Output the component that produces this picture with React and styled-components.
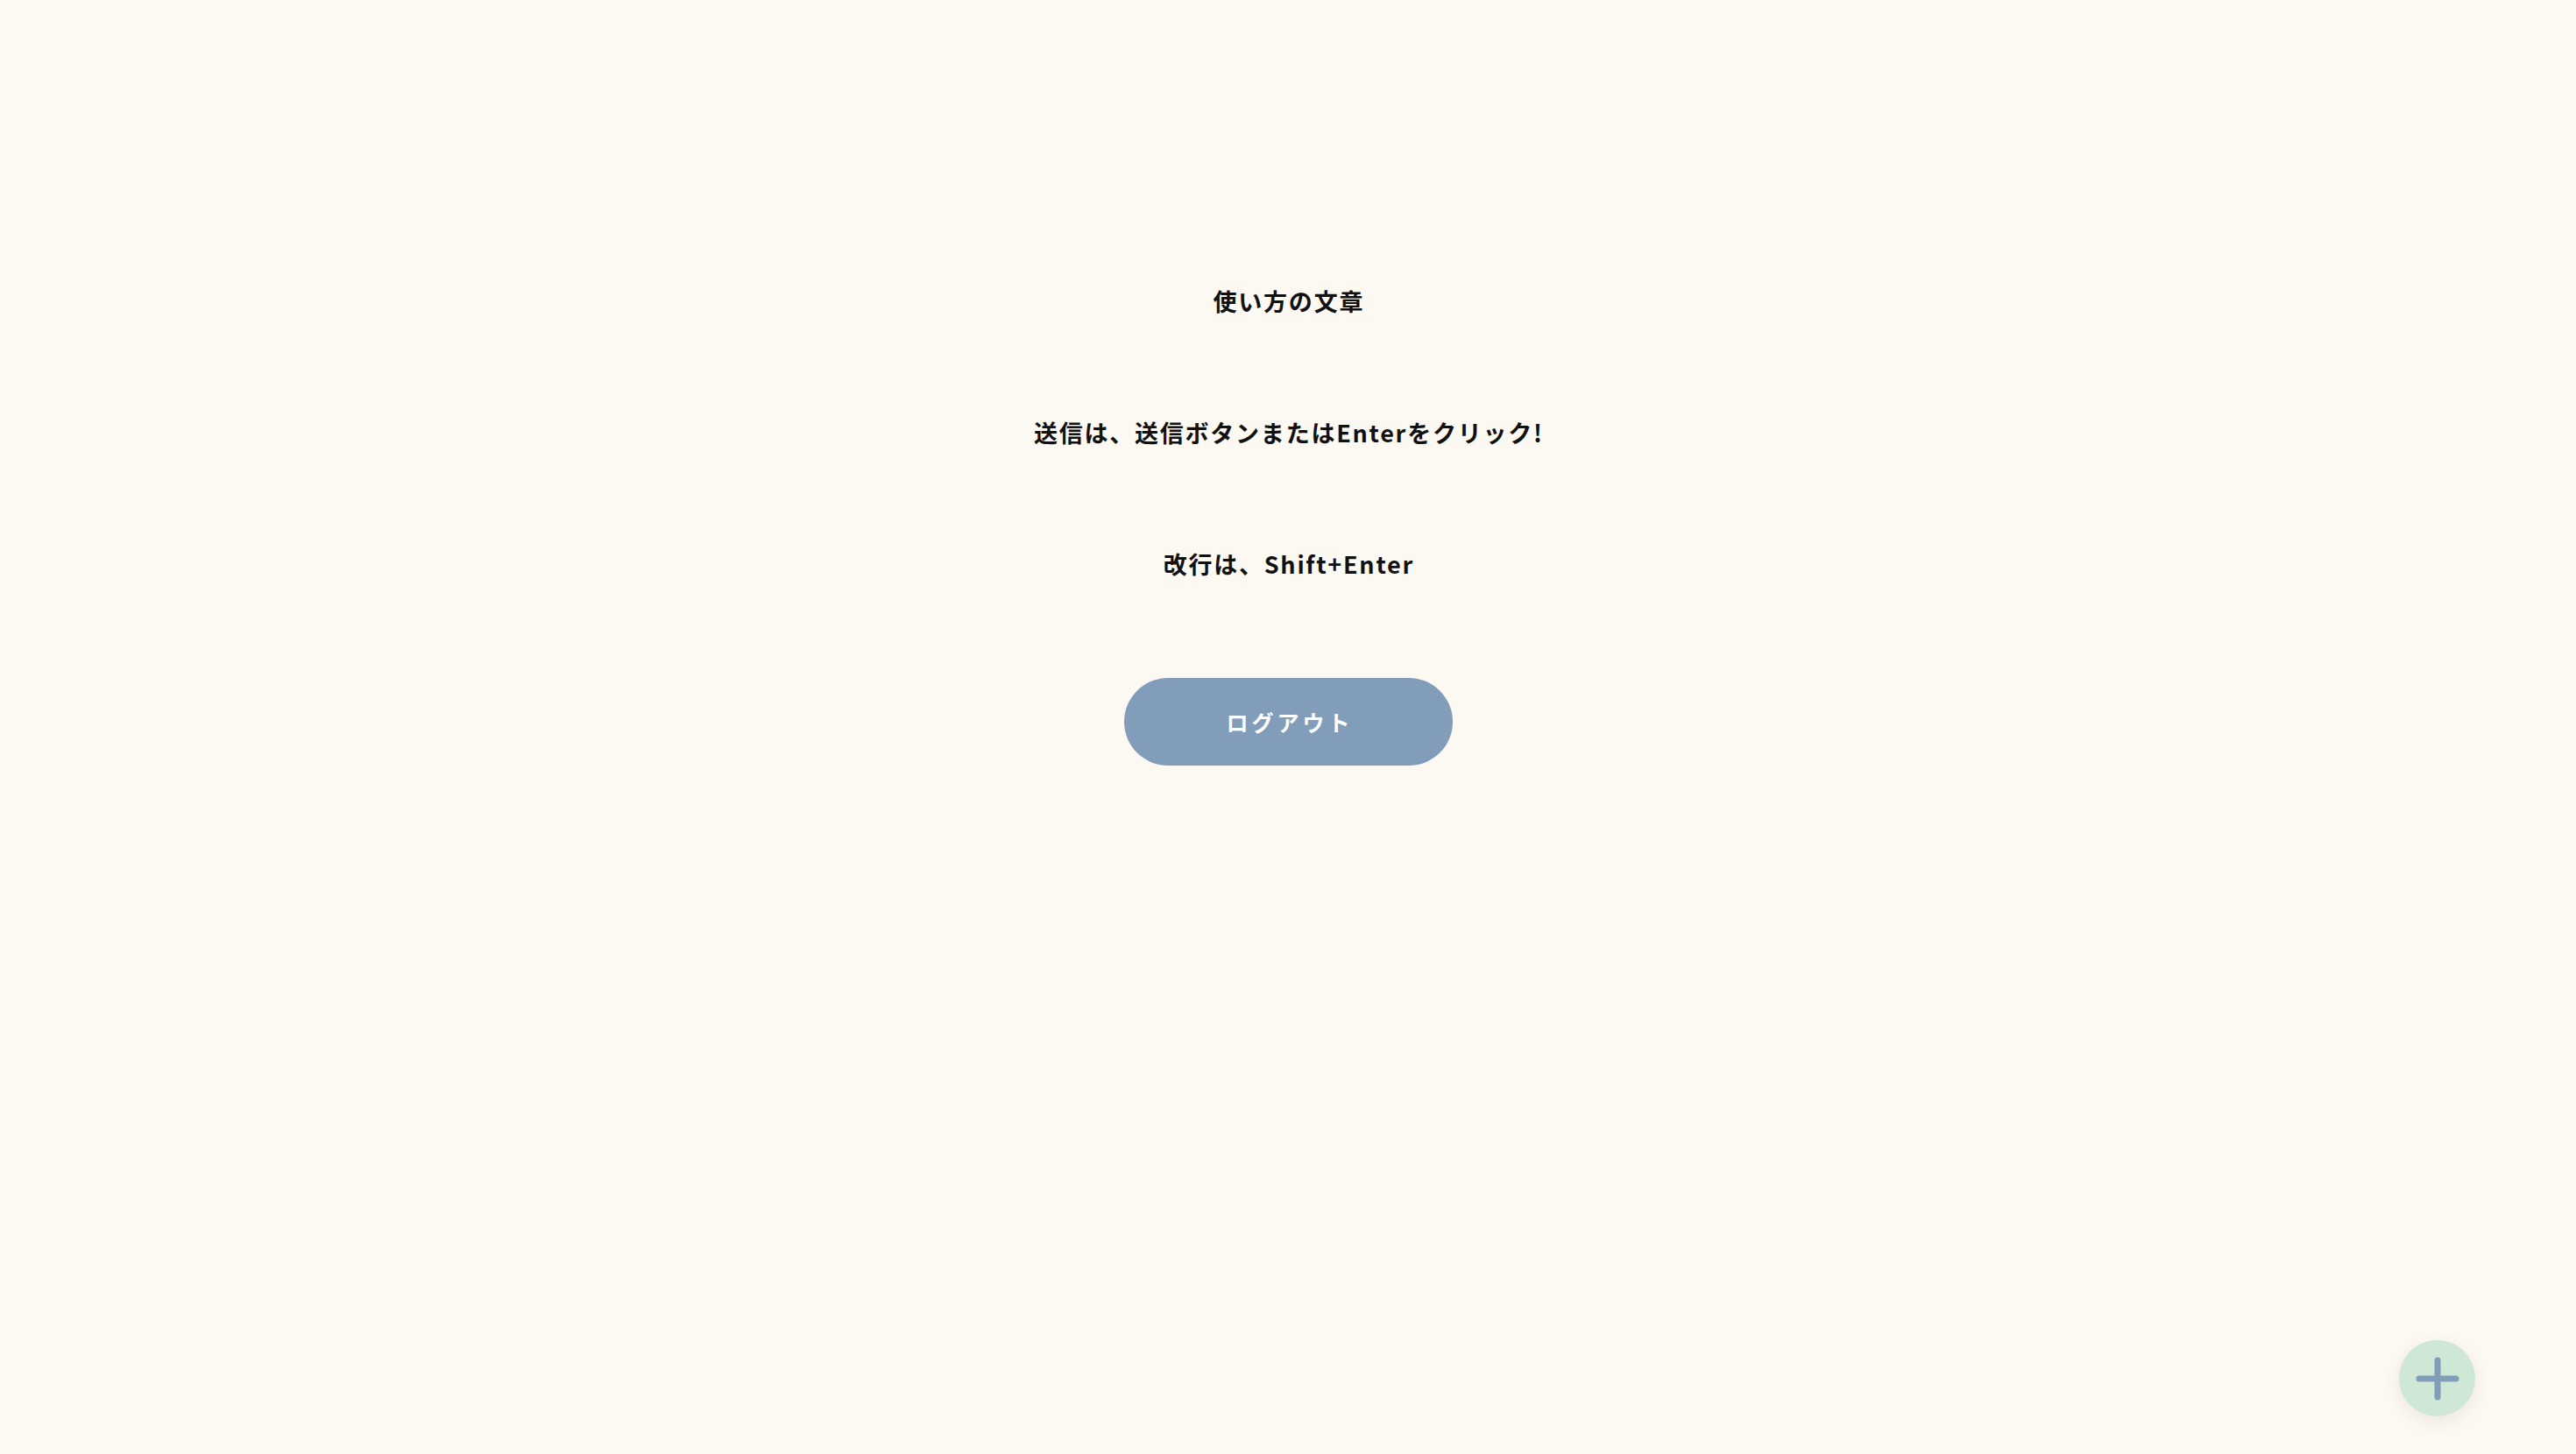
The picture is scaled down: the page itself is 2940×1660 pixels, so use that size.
import React from 'react';
import styled, { createGlobalStyle } from 'styled-components';

const GlobalStyle = createGlobalStyle`
    html, body {
        margin: 0;
        padding: 0;
        background-color: #fcf9f2;
        font-family: "Noto Sans CJK JP", "Noto Sans", sans-serif;
    }
`;

function App() {
    const notes = [
        '使い方の文章',
        '送信は、送信ボタンまたはEnterをクリック!',
        '改行は、Shift+Enter',
    ];

    return (
        <>
            <GlobalStyle />
            <PageStyled>
                {notes.map((note) => (
                    <Note key={note}>{note}</Note>
                ))}
                <LogoutButton type="button">ログアウト</LogoutButton>
            </PageStyled>
            <AddButton type="button" aria-label="追加">
                <svg width="50" height="50" viewBox="0 0 50 50">
                    <path
                        d="M25 4 V46 M4 25 H46"
                        stroke="#819db9"
                        strokeWidth="7"
                        strokeLinecap="round"
                        fill="none"
                    />
                </svg>
            </AddButton>
        </>
    );
}

const PageStyled = styled.main`
    min-height: 100vh;
    box-sizing: border-box;
    padding-top: 324px;
    display: flex;
    flex-direction: column;
    align-items: center;
    gap: 110px;
`;

const Note = styled.p`
    margin: 0;
    font-size: 27px;
    line-height: 40px;
    font-weight: 700;
    color: #111;
    letter-spacing: 0.065em;
    text-indent: 0.065em;
`;

const LogoutButton = styled.button`
    width: 375px;
    height: 100px;
    border: none;
    border-radius: 50px;
    background-color: #819db9;
    color: #fff;
    font-family: inherit;
    font-size: 25px;
    font-weight: 700;
    letter-spacing: 0.16em;
    text-indent: 0.16em;
    cursor: pointer;
`;

const AddButton = styled.button`
    position: fixed;
    right: 115px;
    bottom: 43px;
    width: 87px;
    height: 87px;
    border: none;
    border-radius: 50%;
    background-color: #cfe8d5;
    display: flex;
    align-items: center;
    justify-content: center;
    padding: 0;
    box-shadow: 0 6px 18px rgba(120, 100, 80, 0.12);
    cursor: pointer;
`;

export default App;
